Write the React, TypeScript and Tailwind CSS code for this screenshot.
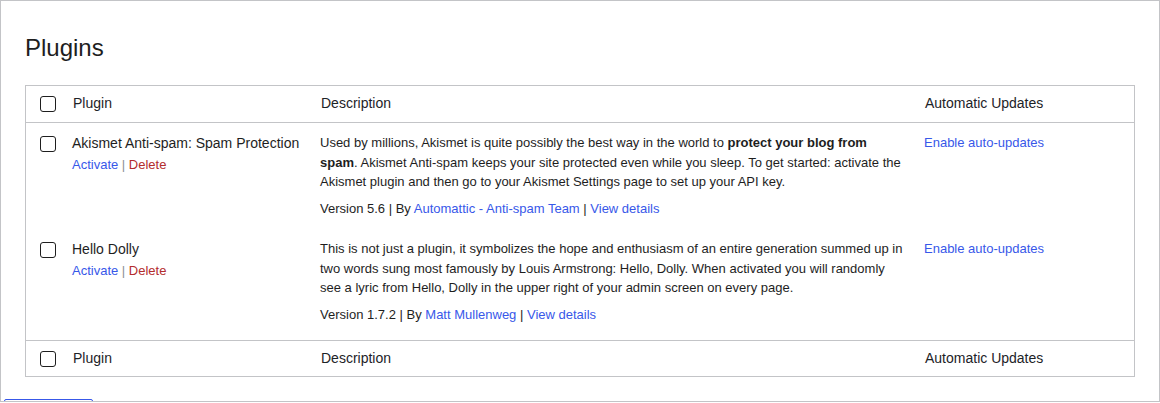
import React from 'react';

interface Plugin {
  name: string;
  description: React.ReactNode;
  version: string;
  author: string;
  rowClass: string;
}

const PLUGINS: Plugin[] = [
  {
    name: 'Akismet Anti-spam: Spam Protection',
    description: (
      <>
        Used by millions, Akismet is quite possibly the best way in the world to{' '}
        <strong className="font-bold">protect your blog from spam</strong>. Akismet Anti-spam keeps your site
        protected even while you sleep. To get started: activate the Akismet plugin and then go to your Akismet
        Settings page to set up your API key.
      </>
    ),
    version: '5.6',
    author: 'Automattic - Anti-spam Team',
    rowClass: 'pb-[11px]',
  },
  {
    name: 'Hello Dolly',
    description: (
      <>
        This is not just a plugin, it symbolizes the hope and enthusiasm of an entire generation summed up in two
        words sung most famously by Louis Armstrong: Hello, Dolly. When activated you will randomly see a lyric
        from Hello, Dolly in the upper right of your admin screen on every page.
      </>
    ),
    version: '1.7.2',
    author: 'Matt Mullenweg',
    rowClass: 'pb-[16px]',
  },
];

function Checkbox() {
  return <span className="block w-4 h-4 border border-[#1e1e1e] rounded-[3px] bg-white" />;
}

function HeaderRow({ border }: { border: 'top' | 'bottom' }) {
  return (
    <div
      className={`grid grid-cols-[36px_248px_604px_1fr] items-center text-[14px] leading-[20px] text-[#1d2327] ${
        border === 'bottom' ? 'h-[37px] border-b border-[#c3c4c7]' : 'h-[36px] border-t border-[#c3c4c7]'
      }`}
    >
      <div className="pl-[14px]">
        <Checkbox />
      </div>
      <div className="pl-[11px] pr-[10px] pb-[2px]">Plugin</div>
      <div className="pl-[11px] pr-[10px] pb-[2px]">Description</div>
      <div className="pl-[11px] pr-[10px] pb-[2px]">Automatic Updates</div>
    </div>
  );
}

export default function App() {
  return (
    <div
      className="w-[1160px] h-[402px] border border-[#c3c4c7] bg-white overflow-hidden flex flex-col"
      style={{ fontFamily: '"Liberation Sans", Arial, sans-serif' }}
    >
      <div className="px-6">
        {/* Page title */}
        <h1 className="pt-[32px] mb-[22px] text-[24px] leading-[30px] font-normal text-[#1e1e1e]">Plugins</h1>

        {/* Plugins table */}
        <div className="border border-[#c3c4c7]">
          <HeaderRow border="bottom" />

          {PLUGINS.map((plugin) => (
            <div key={plugin.name} className={`grid grid-cols-[36px_248px_604px_1fr] pt-[10px] ${plugin.rowClass}`}>
              <div className="pl-[14px] pt-[3px]">
                <Checkbox />
              </div>
              <div className="px-[10px]">
                <p className="text-[14px] leading-[20px] text-[#1e1e1e]">{plugin.name}</p>
                <p className="mt-[2px] text-[13px] leading-[19.5px]">
                  <a href="#" className="text-[#3858e9]">Activate</a>
                  <span className="text-[#8c8f94]"> | </span>
                  <a href="#" className="text-[#b32d2e]">Delete</a>
                </p>
              </div>
              <div className="px-[10px] text-[13px] leading-[19.5px] text-[#1e1e1e]">
                <p>{plugin.description}</p>
                <p className="mt-[7px]">
                  Version {plugin.version} | By{' '}
                  <a href="#" className="text-[#3858e9]">{plugin.author}</a> |{' '}
                  <a href="#" className="text-[#3858e9]">View details</a>
                </p>
              </div>
              <div className="px-[10px] text-[13px] leading-[19.5px]">
                <a href="#" className="text-[#3858e9]">Enable auto-updates</a>
              </div>
            </div>
          ))}

          <HeaderRow border="top" />
        </div>
      </div>

      {/* Bulk action button, cut off by the frame */}
      <div className="mt-[22px] ml-[3px] w-[89px] h-[30px] shrink-0 border border-[#3858e9] rounded-[2px]" />
    </div>
  );
}
